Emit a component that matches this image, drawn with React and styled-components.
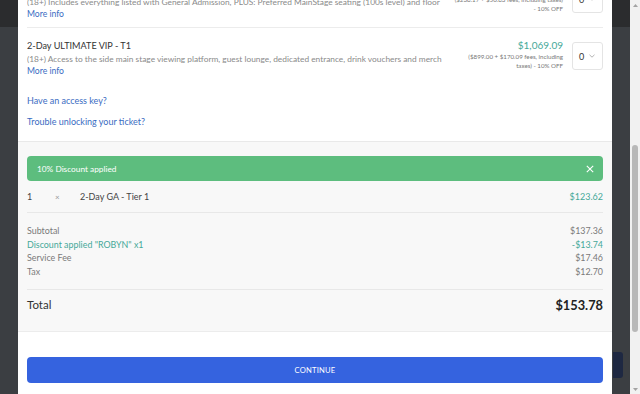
import React from 'react';
import styled, { createGlobalStyle } from 'styled-components';

const Global = createGlobalStyle`
  html, body { margin: 0; padding: 0; }
  body { font-family: Lato, "Noto Sans", sans-serif; background: #3b3e42; }
  #root { width: 640px; height: 394px; overflow: hidden; }
`;

const Screen = styled.div`
  display: flex;
  width: 640px;
  height: 394px;
  overflow: hidden;
`;

const Backdrop = styled.div`
  width: 18px;
  flex: none;
  background: #3b3e42;
  display: flex;
  flex-direction: column;
`;

const BackdropBand = styled.div`
  height: 27px;
  background: #2b2c2e;
`;

const PageButton = styled.div`
  margin-top: 325px;
  margin-left: 1px;
  width: 10px;
  height: 26px;
  border-radius: 0 3px 3px 0;
  background: #1e2842;
`;

const Modal = styled.div`
  width: 594px;
  flex: none;
  background: #fff;
  display: flex;
  flex-direction: column;
  overflow: hidden;
`;

const TicketList = styled.div`
  margin-top: -30px;
  padding: 0 9px;
`;

const TicketRow = styled.div`
  border-top: 1px solid #ececec;
  padding: 11px 0 7px;
  display: grid;
  grid-template-columns: minmax(0, 1fr) 111px 31px;
  column-gap: 9px;
  align-items: start;
`;

const TicketInfo = styled.div`
  min-width: 0;
`;

const TicketTitle = styled.div`
  font-size: 9.1px;
  line-height: 13px;
  margin-bottom: 1px;
  color: #333;
`;

const TicketDesc = styled.div`
  font-size: 8.35px;
  line-height: 12px;
  color: #8a8a8a;
  white-space: nowrap;
  overflow: hidden;
`;

const Link = styled.a`
  display: block;
  font-size: ${p => p.$size || 8.6}px;
  line-height: 12px;
  color: #3a6cc2;
  text-decoration: none;
`;

const PriceCol = styled.div`
  text-align: right;
`;

const Price = styled.div`
  font-size: 10px;
  line-height: 13px;
  color: #45a898;
`;

const Fee = styled.div`
  font-size: 6.2px;
  line-height: 9px;
  color: #777;
`;

const Select = styled.div`
  margin-top: 3px;
  height: 28px;
  box-sizing: border-box;
  border: 1px solid #e4e4e4;
  border-radius: 3px;
  display: flex;
  align-items: center;
  justify-content: space-between;
  padding: 0 7px 0 6px;
  font-size: 9px;
  color: #333;
`;

const Links = styled.div`
  padding: 11px 9px 13px;
  display: flex;
  flex-direction: column;
  gap: 9px;
`;

const Summary = styled.div`
  border-top: 1px solid #e9e9e9;
  border-bottom: 1px solid #ececec;
  background: #f8f8f8;
  padding: 14px 9px 0;
`;

const Alert = styled.div`
  height: 25px;
  border-radius: 4px;
  background: #5dbd7e;
  color: #fff;
  font-size: 8.3px;
  display: flex;
  align-items: center;
  justify-content: space-between;
  padding: 0 9px 0 10px;
`;

const LineItem = styled.div`
  height: 31px;
  border-bottom: 1px solid #e8e8e8;
  display: grid;
  grid-template-columns: 28px 25px 1fr auto;
  align-items: center;
  font-size: 9px;
  color: #444;
`;

const Times = styled.span`
  color: #999;
  font-size: 8px;
`;

const Amount = styled.span`
  color: ${p => (p.$teal ? '#45a898' : '#777')};
  text-align: right;
`;

const Lines = styled.div`
  padding: 11px 0 10px;
  border-bottom: 1px solid #e8e8e8;
`;

const Line = styled.div`
  display: flex;
  justify-content: space-between;
  font-size: 8.9px;
  line-height: 13.7px;
  color: ${p => (p.$teal ? '#45a898' : '#7a7a7a')};
`;

const TotalRow = styled.div`
  display: flex;
  justify-content: space-between;
  align-items: center;
  padding: 6px 0 17px;
  line-height: 18px;
`;

const TotalLabel = styled.span`
  font-size: 11.5px;
  color: #333;
`;

const TotalValue = styled.span`
  font-size: 12.8px;
  font-weight: 700;
  color: #222;
`;

const Footer = styled.div`
  padding: 25px 9px 0;
`;

const Button = styled.button`
  width: 100%;
  height: 26px;
  border: none;
  border-radius: 4px;
  background: #3563df;
  color: #fff;
  font-family: Lato, "Noto Sans", sans-serif;
  font-size: 7.6px;
  letter-spacing: 0.2px;
  text-transform: uppercase;
`;

const Scrollbar = styled.div`
  width: 10px;
  flex: none;
  background: #f1f1f1;
  display: flex;
  flex-direction: column;
  align-items: center;
`;

const ArrowBox = styled.div`
  height: 10px;
  display: flex;
  align-items: center;
  justify-content: center;
`;

const Thumb = styled.div`
  margin-top: 135px;
  width: 6px;
  height: 187px;
  border-radius: 3px;
  background: #b8b8b8;
`;

const Spacer = styled.div`
  flex: 1;
`;

const Chevron = () => (
  <svg width="6" height="4" viewBox="0 0 6 4">
    <path d="M0.5 0.8 L3 3.2 L5.5 0.8" fill="none" stroke="#aaa" strokeWidth="0.9" />
  </svg>
);

const CloseIcon = () => (
  <svg width="8" height="8" viewBox="0 0 8 8">
    <path d="M0.8 0.8 L7.2 7.2 M7.2 0.8 L0.8 7.2" stroke="#fff" strokeWidth="1.1" />
  </svg>
);

const Tri = ({ up }) => (
  <svg width="5" height="3" viewBox="0 0 5 3">
    <path d={up ? 'M0 3 L2.5 0 L5 3 Z' : 'M0 0 L2.5 3 L5 0 Z'} fill="#a3a3a3" />
  </svg>
);

const tickets = [
  {
    title: '2-Day VIP - T1',
    desc: '(18+) Includes everything listed with General Admission, PLUS: Preferred MainStage seating (100s level) and floor',
    price: '$260.10',
    fee: '($238.17 + $50.83 fees, including taxes) - 10% OFF',
  },
  {
    title: '2-Day ULTIMATE VIP - T1',
    desc: '(18+) Access to the side main stage viewing platform, guest lounge, dedicated entrance, drink vouchers and merch',
    price: '$1,069.09',
    fee: '($899.00 + $170.09 fees, including taxes) - 10% OFF',
  },
];

export default function App() {
  return (
    <Screen>
      <Global />
      <Backdrop>
        <BackdropBand />
      </Backdrop>
      <Modal>
        <TicketList>
          {tickets.map(t => (
            <TicketRow key={t.title}>
              <TicketInfo>
                <TicketTitle>{t.title}</TicketTitle>
                <TicketDesc>{t.desc}</TicketDesc>
                <Link href="#">More info</Link>
              </TicketInfo>
              <PriceCol>
                <Price>{t.price}</Price>
                <Fee>{t.fee}</Fee>
              </PriceCol>
              <Select>
                <span>0</span>
                <Chevron />
              </Select>
            </TicketRow>
          ))}
        </TicketList>
        <Links>
          <Link href="#" $size={9}>Have an access key?</Link>
          <Link href="#" $size={9}>Trouble unlocking your ticket?</Link>
        </Links>
        <Summary>
          <Alert>
            <span>10% Discount applied</span>
            <CloseIcon />
          </Alert>
          <LineItem>
            <span>1</span>
            <Times>×</Times>
            <span>2-Day GA - Tier 1</span>
            <Amount $teal>$123.62</Amount>
          </LineItem>
          <Lines>
            <Line><span>Subtotal</span><span>$137.36</span></Line>
            <Line $teal><span>Discount applied "ROBYN" x1</span><span>-$13.74</span></Line>
            <Line><span>Service Fee</span><span>$17.46</span></Line>
            <Line><span>Tax</span><span>$12.70</span></Line>
          </Lines>
          <TotalRow>
            <TotalLabel>Total</TotalLabel>
            <TotalValue>$153.78</TotalValue>
          </TotalRow>
        </Summary>
        <Footer>
          <Button>Continue</Button>
        </Footer>
      </Modal>
      <Backdrop>
        <BackdropBand />
        <PageButton />
      </Backdrop>
      <Scrollbar>
        <ArrowBox><Tri up /></ArrowBox>
        <Thumb />
        <Spacer />
        <ArrowBox><Tri /></ArrowBox>
      </Scrollbar>
    </Screen>
  );
}
